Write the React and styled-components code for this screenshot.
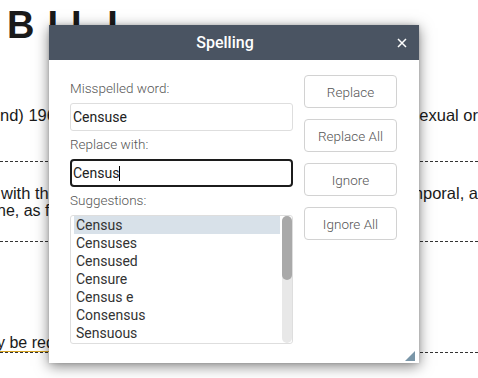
import React from "react";
import styled, { createGlobalStyle } from "styled-components";

const GlobalStyle = createGlobalStyle`
  html, body { margin: 0; padding: 0; background: #fff; overflow: hidden; }
  body { font-family: "Liberation Sans", Arial, sans-serif; }
`;

const Page = styled.div`
  position: relative;
  width: 478px;
  height: 378px;
  overflow: hidden;
`;

const Doc = styled.div`
  width: 478px;
  color: #1a1a1a;
  font-family: "Liberation Sans", Arial, sans-serif;
`;

const Title = styled.div`
  font-size: 38px;
  font-weight: 700;
  line-height: 44px;
  letter-spacing: 13px;
  padding: 3px 0 0 7px;
  white-space: nowrap;
`;

const Row = styled.div`
  padding-top: ${(p) => p.$top}px;
  padding-bottom: ${(p) => p.$bottom}px;
  border-bottom: 1px dashed #333;
`;

const Line = styled.div`
  display: flex;
  justify-content: space-between;
  font-size: ${(p) => p.$size || 16.5}px;
  line-height: ${(p) => p.$lh || 18}px;
  white-space: nowrap;
  overflow: hidden;
  padding-left: ${(p) => Math.max(p.$indent || 0, 0)}px;
  & > span:first-child {
    margin-left: ${(p) => Math.min(p.$indent || 0, 0)}px;
  }
`;

const Marked = styled.span`
  text-decoration: underline;
  text-decoration-color: #d9a520;
  text-underline-offset: 3px;
`;

const Dialog = styled.div`
  position: absolute;
  left: 49px;
  top: 25px;
  width: 370px;
  height: 338px;
  background: #fff;
  box-shadow: 0 3px 13px rgba(0, 0, 0, 0.5), 0 0 3px rgba(0, 0, 0, 0.15);
  display: flex;
  flex-direction: column;
  font-family: Roboto, "Noto Sans", sans-serif;
`;

const Header = styled.div`
  height: 35px;
  background: #4a5462;
  display: flex;
  align-items: center;
  padding: 0 8px;
`;

const HeaderTitle = styled.div`
  flex: 1;
  text-align: center;
  color: #fff;
  font-size: 16px;
  font-weight: 500;
`;

const CloseButton = styled.div`
  width: 18px;
  height: 18px;
  display: flex;
  align-items: center;
  justify-content: center;
`;

const Body = styled.div`
  display: flex;
  gap: 11px;
  padding: 15px 22px 0 21px;
`;

const LeftCol = styled.div`
  width: 223px;
  display: flex;
  flex-direction: column;
  padding-top: 5px;
`;

const RightCol = styled.div`
  width: 93px;
  display: flex;
  flex-direction: column;
  gap: 11px;
`;

const Label = styled.div`
  font-size: 13.5px;
  font-weight: 300;
  line-height: 16px;
  color: #555;
  margin-bottom: 7px;
`;

const Field = styled.div`
  box-sizing: border-box;
  height: 28px;
  border: ${(p) => (p.$focused ? "2px solid #1c1c1c" : "1px solid #dedede")};
  border-radius: ${(p) => (p.$focused ? 4 : 3)}px;
  padding: 0 ${(p) => (p.$focused ? 1 : 2)}px;
  font-size: 14px;
  color: #222;
  display: flex;
  align-items: center;
  margin-bottom: 5px;
`;

const Caret = styled.span`
  display: inline-block;
  width: 1px;
  height: 15px;
  background: #000;
`;

const List = styled.div`
  box-sizing: border-box;
  height: 129px;
  border: 1px solid #dedede;
  border-radius: 3px;
  display: flex;
  overflow: hidden;
`;

const Items = styled.div`
  flex: 1;
  padding: 0 2px 0 3px;
  overflow: hidden;
`;

const Item = styled.div`
  height: 18px;
  line-height: 18px;
  padding-left: 2px;
  font-size: 14px;
  color: #333;
  background: ${(p) => (p.$selected ? "#d8e1e9" : "transparent")};
`;

const ScrollTrack = styled.div`
  width: 10px;
  background: #e8e8e8;
  border-radius: 5px;
  display: flex;
  flex-direction: column;
`;

const ScrollThumb = styled.div`
  height: 64px;
  background: #a9a9a9;
  border-radius: 5px;
`;

const Button = styled.div`
  box-sizing: border-box;
  height: 33px;
  border: 1px solid #d2d2d2;
  border-radius: 4px;
  background: #fff;
  display: flex;
  align-items: center;
  justify-content: center;
  font-size: 13.5px;
  font-weight: 300;
  color: #555;
`;

const Grip = styled.svg`
  position: absolute;
  right: 4px;
  bottom: 2px;
`;

const suggestions = [
  "Census",
  "Censuses",
  "Censused",
  "Censure",
  "Census e",
  "Consensus",
  "Sensuous",
  "Censer",
  "Censor",
  "Censures",
  "Cense",
  "Censuring",
  "Consensuses",
  "Censusing",
];

export default function App() {
  return (
    <Page>
      <GlobalStyle />
      <Doc>
        <Title>BILL</Title>
        <Row $top={59} $bottom={37}>
          <Line>
            <span>nd) 1964 prohibited discrimination</span>
            <span>on grounds of sex, sexual or</span>
          </Line>
        </Row>
        <Row $top={23} $bottom={22}>
          <Line $lh={17} $indent={1}>
            <span>with the exception of any</span>
            <span>spiritual, ecclesiastical or temporal, a</span>
          </Line>
          <Line $lh={17} $size={16} $indent={-3}>
            <span>ne, as follows, shall apply to all members.</span>
          </Line>
        </Row>
        <Row $top={92} $bottom={0}>
          <Line $size={16} $indent={-3}>
            <span>
              <Marked>y be req</Marked>uired by the Secretary.
            </span>
          </Line>
        </Row>
      </Doc>

      <Dialog>
        <Header>
          <HeaderTitle>Spelling</HeaderTitle>
          <CloseButton>
            <svg width="10" height="10" viewBox="0 0 10 10">
              <path d="M1 1L9 9M9 1L1 9" stroke="#fff" strokeWidth="1.5" />
            </svg>
          </CloseButton>
        </Header>
        <Body>
          <LeftCol>
            <Label>Misspelled word:</Label>
            <Field>Censuse</Field>
            <Label>Replace with:</Label>
            <Field $focused>
              Census
              <Caret />
            </Field>
            <Label>Suggestions:</Label>
            <List>
              <Items>
                {suggestions.map((s, i) => (
                  <Item key={s} $selected={i === 0}>
                    {s}
                  </Item>
                ))}
              </Items>
              <ScrollTrack>
                <ScrollThumb />
              </ScrollTrack>
            </List>
          </LeftCol>
          <RightCol>
            <Button>Replace</Button>
            <Button>Replace All</Button>
            <Button>Ignore</Button>
            <Button>Ignore All</Button>
          </RightCol>
        </Body>
        <Grip width="10" height="10" viewBox="0 0 10 10">
          <polygon points="10,0 10,10 0,10" fill="#7a96a8" />
        </Grip>
      </Dialog>
    </Page>
  );
}
